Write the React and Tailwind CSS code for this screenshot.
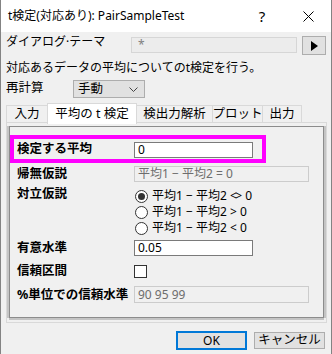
import { useState } from "react";

function TextBox({ value, w = "w-[119px]", h = "h-[16px]", disabled }) {
  return (
    <div
      className={`${w} ${h} flex items-center pl-[3px] text-[12px] leading-none ${
        disabled ? "bg-[#f0f0f0] border border-[#cccccc] text-[#6d6d6d]" : "bg-white border border-[#7a7a7a] text-black"
      }`}
    >
      {value}
    </div>
  );
}

function Radio({ checked, children, onClick }) {
  return (
    <div className="h-[16px] flex items-center gap-[4px] cursor-default" onClick={onClick}>
      <div className="w-[13px] h-[13px] rounded-full border border-[#333333] bg-white flex items-center justify-center">
        {checked && <div className="w-[7px] h-[7px] rounded-full bg-[#333333]" />}
      </div>
      <span className="text-[12px] leading-none whitespace-pre">{children}</span>
    </div>
  );
}

const tabs = ["入力", "平均の t 検定", "検出力解析", "プロット", "出力"];
const tabWidths = ["w-[42px]", "w-[90px]", "w-[77px]", "w-[51px]", "w-[40px]"];

export default function App() {
  const [tab, setTab] = useState(1);
  const [alt, setAlt] = useState(0);

  return (
    <div className="w-[332px] h-[354px] bg-[#f0f0f0] border-x border-[#838383] text-black font-['Noto_Sans','Noto_Sans_CJK_JP',sans-serif] overflow-hidden select-none">
      {/* title bar */}
      <div className="h-[32px] bg-white flex items-center">
        <span className="pl-[7px] text-[12px] leading-none">t検定(対応あり): PairSampleTest</span>
        <div className="flex-1" />
        <div className="w-[46px] h-full flex items-center justify-center text-[15px] leading-none">?</div>
        <div className="w-[46px] h-full flex items-center justify-center">
          <svg width="11" height="11" viewBox="0 0 11 11">
            <path d="M0.5 0.5 L10.5 10.5 M10.5 0.5 L0.5 10.5" stroke="#000" strokeWidth="1" />
          </svg>
        </div>
      </div>

      <div className="px-[5px]">
        {/* theme row */}
        <div className="mt-[3px] h-[20px] flex items-start">
          <span className="w-[125px] text-[12px] leading-[14px]">ダイアログ·テーマ</span>
          <div className="mt-[2px] w-[166px] h-[16px] bg-[#ececec] border border-[#d6d6d6] pl-[6px] flex items-center text-[12px] leading-none text-[#808080]">
            *
          </div>
          <div className="ml-[5px] mt-[1px] w-[24px] h-[19px] bg-[#e1e1e1] border border-[#adadad] flex items-center justify-center">
            <svg width="8" height="10" viewBox="0 0 8 10">
              <path d="M1 0 L8 5 L1 10 Z" fill="#000" />
            </svg>
          </div>
        </div>

        <div className="mt-[6px] text-[12px] leading-[14px]">対応あるデータの平均についてのt検定を行う。</div>

        {/* recalc row */}
        <div className="mt-[5px] h-[18px] flex items-center">
          <span className="w-[67px] text-[12.5px] leading-[14px] -mt-[2px]">再計算</span>
          <div className="w-[72px] h-[18px] bg-[#e1e1e1] border border-[#adadad] flex items-center pl-[4px] pr-[6px] text-[12.5px] leading-none">
            <span className="flex-1">手動</span>
            <svg width="9" height="5" viewBox="0 0 9 5">
              <path d="M0.5 0.5 L4.5 4.5 L8.5 0.5" stroke="#444" strokeWidth="1" fill="none" />
            </svg>
          </div>
        </div>

        {/* tabs */}
        <div className="mt-[5px] h-[19px] flex items-end relative z-10">
          {tabs.map((t, i) => (
            <div
              key={t}
              onClick={() => setTab(i)}
              className={`${tabWidths[i]} -ml-px first:ml-0 flex justify-center text-[12.5px] leading-none whitespace-nowrap border border-b-0 cursor-default ${
                tab === i
                  ? "h-[21px] -mb-[2px] bg-white border-[#d9d9d9] pt-[4px] relative z-10"
                  : "h-[17px] bg-[#f0f0f0] border-[#d9d9d9] pt-[2px]"
              }`}
            >
              {t}
            </div>
          ))}
        </div>

        {/* panel */}
        <div className="w-[321px] h-[201px] border border-[#d9d9d9] bg-[#f0f0f0] pt-[3px] pl-[2px]">
          <div className="w-[315px] h-[192px] border border-[#8c8c8c] shadow-[-2px_0_0_#c4c4c4,0_2px_0_#c4c4c4,2px_0_0_#c4c4c4]">
            {/* highlighted row */}
            <div className="mt-[8px] w-[256px] h-[28px] border-[4px] border-[#ff00ff] flex items-center">
              <span className="w-[120px] pl-[3px] text-[12.5px] leading-[14px] font-bold -mt-[1px]">検定する平均</span>
              <div className="mt-[1px]">
                <TextBox value="0" />
              </div>
            </div>

            <div className="pl-[7px]">
              <div className="mt-[3px] h-[16px] flex items-center">
                <span className="w-[117px] text-[12.5px] leading-[14px] font-bold">帰無仮説</span>
                <TextBox value="平均1 − 平均2 = 0" w="w-[175px]" disabled />
              </div>

              <div className="mt-[6px] flex items-start">
                <span className="w-[117px] text-[12.5px] leading-[14px] font-bold -mt-[1px]">対立仮説</span>
                <div className="pl-[1px]">
                  <Radio checked={alt === 0} onClick={() => setAlt(0)}>
                    平均1 − 平均2 <span className="tracking-[-1.5px]">&lt;</span>&gt; 0
                  </Radio>
                  <Radio checked={alt === 1} onClick={() => setAlt(1)}>
                    平均1 − 平均2 &gt; 0
                  </Radio>
                  <Radio checked={alt === 2} onClick={() => setAlt(2)}>
                    平均1 − 平均2 &lt; 0
                  </Radio>
                </div>
              </div>

              <div className="mt-[4px] h-[16px] flex items-center">
                <span className="w-[117px] text-[12.5px] leading-[14px] font-bold">有意水準</span>
                <TextBox value="0.05" />
              </div>

              <div className="mt-[8px] h-[14px] flex items-center">
                <span className="w-[117px] text-[12.5px] leading-[14px] font-bold">信頼区間</span>
                <div className="w-[13px] h-[13px] bg-white border border-[#333333]" />
              </div>

              <div className="mt-[8px] h-[17px] flex items-center">
                <span className="w-[117px] text-[12.5px] leading-[14px] font-bold whitespace-nowrap">%単位での信頼水準</span>
                <TextBox value="90 95 99" w="w-[175px]" h="h-[17px]" disabled />
              </div>
            </div>
          </div>
        </div>

        {/* buttons */}
        <div className="mt-[8px] flex items-center justify-end pr-[1px] gap-[7px]">
          <button className="w-[71px] h-[19px] bg-[#e1e1e1] border-2 border-[#0078d7] text-[12px] leading-none">OK</button>
          <button className="w-[71px] h-[17px] bg-[#e1e1e1] border border-[#adadad] text-[12.5px] leading-none">キャンセル</button>
        </div>
      </div>
    </div>
  );
}
